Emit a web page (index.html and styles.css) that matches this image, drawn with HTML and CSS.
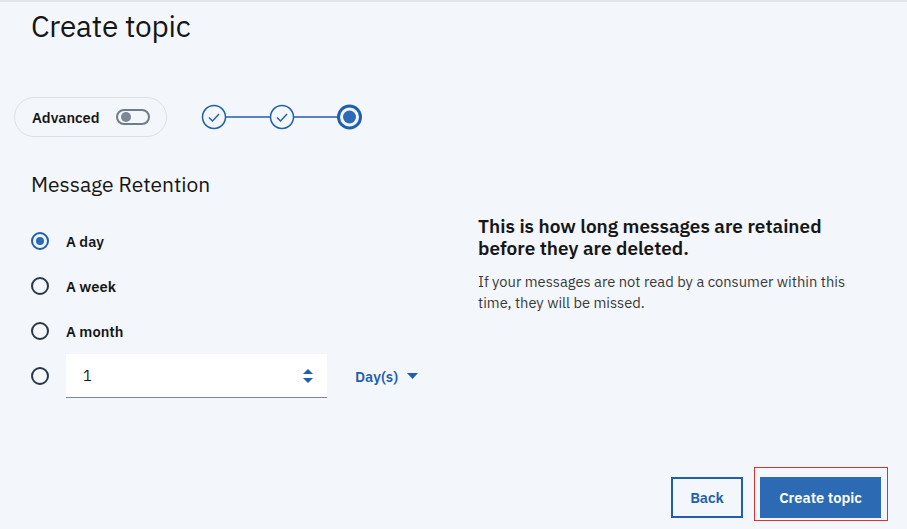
FILE: index.html
```html
<!DOCTYPE html>
<html lang="en">
<head>
<meta charset="utf-8">
<title>Create topic</title>
<link rel="stylesheet" href="styles.css">
</head>
<body>
<div class="page">
  <h1 class="title">Create topic</h1>

  <div class="controls">
    <div class="advanced">
      <span class="advanced-label">Advanced</span>
      <span class="toggle"><span class="toggle-knob"></span></span>
    </div>
    <svg class="stepper" width="164" height="28" viewBox="0 0 164 28">
      <line x1="25" y1="14" x2="69" y2="14" stroke="#1f5fae" stroke-width="1.5"/>
      <line x1="93" y1="14" x2="137" y2="14" stroke="#1f5fae" stroke-width="1.5"/>
      <circle cx="13" cy="14" r="11.5" fill="#f3f6fb" stroke="#1f5fae" stroke-width="1.5"/>
      <path d="M8 14.5 L11.5 18 L18 11" fill="none" stroke="#1f5fae" stroke-width="1.4"/>
      <circle cx="81" cy="14" r="11.5" fill="#f3f6fb" stroke="#1f5fae" stroke-width="1.5"/>
      <path d="M76 14.5 L79.5 18 L86 11" fill="none" stroke="#1f5fae" stroke-width="1.4"/>
      <circle cx="148.5" cy="14" r="11" fill="#f3f6fb" stroke="#1f5fae" stroke-width="3"/>
      <circle cx="148.5" cy="14" r="6.5" fill="#2c6bb3"/>
    </svg>
  </div>

  <h2 class="section-title">Message Retention</h2>

  <div class="content">
    <div class="options">
      <label class="option">
        <span class="radio radio-checked"></span>
        <span class="option-label">A day</span>
      </label>
      <label class="option">
        <span class="radio"></span>
        <span class="option-label">A week</span>
      </label>
      <label class="option">
        <span class="radio"></span>
        <span class="option-label">A month</span>
      </label>
      <div class="option option-custom">
        <span class="radio"></span>
        <div class="number-input">
          <span class="number-value">1</span>
          <svg class="number-arrows" width="12" height="18" viewBox="0 0 12 18">
            <path d="M1 7 L6 2 L11 7 Z" fill="#1f5fae"/>
            <path d="M1 11 L6 16 L11 11 Z" fill="#1f5fae"/>
          </svg>
        </div>
        <div class="unit">
          <span>Day(s)</span>
          <svg class="unit-caret" width="11" height="6" viewBox="0 0 11 6">
            <path d="M0 0 L11 0 L5.5 6 Z" fill="#1f5fae"/>
          </svg>
        </div>
      </div>
    </div>

    <div class="info">
      <h3 class="info-title">This is how long messages are retained before they are deleted.</h3>
      <p class="info-text">If your messages are not read by a consumer within this time, they will be missed.</p>
    </div>
  </div>

  <div class="footer">
    <button class="btn btn-secondary">Back</button>
    <div class="highlight">
      <button class="btn btn-primary">Create topic</button>
    </div>
  </div>
</div>
</body>
</html>
```

FILE: styles.css
```css
* { box-sizing: border-box; }

html, body {
  margin: 0;
  height: 100%;
}

body {
  background: #f3f6fb;
  font-family: "IBM Plex Sans", "Noto Sans", "Open Sans", sans-serif;
  color: #161616;
  border-top: 2px solid #e3e5e8;
}

.page {
  height: 100%;
  display: flex;
  flex-direction: column;
  padding: 0 0 0 31px;
}

.title {
  margin: 0;
  padding-top: 6px;
  font-size: 29.8px;
  line-height: 36px;
  font-weight: 400;
  letter-spacing: -0.2px;
  color: #161616;
}

.controls {
  display: flex;
  align-items: center;
  gap: 34px;
  margin: 53px 0 0 -17px;
}

.advanced {
  display: flex;
  align-items: center;
  gap: 16px;
  height: 40px;
  padding: 0 16px 0 17px;
  border: 1px solid #dde1e6;
  border-radius: 20px;
}

.advanced-label {
  font-size: 14.7px;
  font-weight: 600;
  color: #161616;
}

.toggle {
  width: 34px;
  height: 16px;
  border: 2px solid #6f7d8b;
  border-radius: 8px;
  display: flex;
  align-items: center;
  padding-left: 3px;
}

.toggle-knob {
  width: 10px;
  height: 10px;
  border-radius: 50%;
  background: #7b8794;
}

.stepper { display: block; }

.section-title {
  margin: 33px 0 0;
  font-size: 21px;
  line-height: 28px;
  font-weight: 400;
  color: #161616;
}

.content {
  display: grid;
  grid-template-columns: 447px 1fr;
  margin-top: 14px;
}

.options {
  display: flex;
  flex-direction: column;
  gap: 1px;
  padding-top: 7px;
}

.option {
  display: flex;
  align-items: center;
  height: 44px;
}

.radio {
  width: 18px;
  height: 18px;
  border: 2px solid #293846;
  border-radius: 50%;
  flex: none;
  margin-right: 17px;
  display: flex;
  align-items: center;
  justify-content: center;
}

.radio-checked {
  border-color: #1f5fae;
}

.radio-checked::after {
  content: "";
  width: 8px;
  height: 8px;
  border-radius: 50%;
  background: #2c6bb3;
}

.option-label {
  font-size: 14.7px;
  font-weight: 600;
  color: #161616;
}

.option-custom {
  height: 44px;
}

.number-input {
  width: 261px;
  height: 44px;
  background: #ffffff;
  border-bottom: 1px solid #7d8791;
  display: flex;
  align-items: center;
  justify-content: space-between;
  padding: 0 13px 0 17px;
}

.number-value {
  font-size: 14.7px;
  color: #161616;
}

.number-arrows { display: block; }

.unit {
  display: flex;
  align-items: center;
  gap: 9px;
  margin-left: 28px;
  font-size: 14.7px;
  font-weight: 600;
  color: #1f5fae;
}

.unit-caret { display: block; }

.info {
  max-width: 385px;
  padding-top: 3px;
}

.info-title {
  margin: 0;
  font-size: 19px;
  line-height: 22px;
  font-weight: 600;
  color: #161616;
}

.info-text {
  margin: 12px 0 0;
  font-size: 14.7px;
  line-height: 21px;
  color: #393939;
}

.footer {
  margin-top: auto;
  display: flex;
  align-items: flex-end;
  justify-content: flex-end;
  gap: 11px;
  padding: 0 19px 8px 0;
}

.btn {
  font-family: inherit;
  font-size: 14.7px;
  font-weight: 600;
  height: 41px;
  cursor: pointer;
}

.btn-secondary {
  width: 72px;
  background: transparent;
  color: #1f5fae;
  border: 2px solid #1f5fae;
  margin-bottom: 3px;
}

.highlight {
  border: 1px solid #e0302a;
  padding: 9px 6px 2px 5px;
}

.btn-primary {
  width: 121px;
  background: #2c6bb3;
  color: #ffffff;
  border: 1px solid #2c6bb3;
}
```
